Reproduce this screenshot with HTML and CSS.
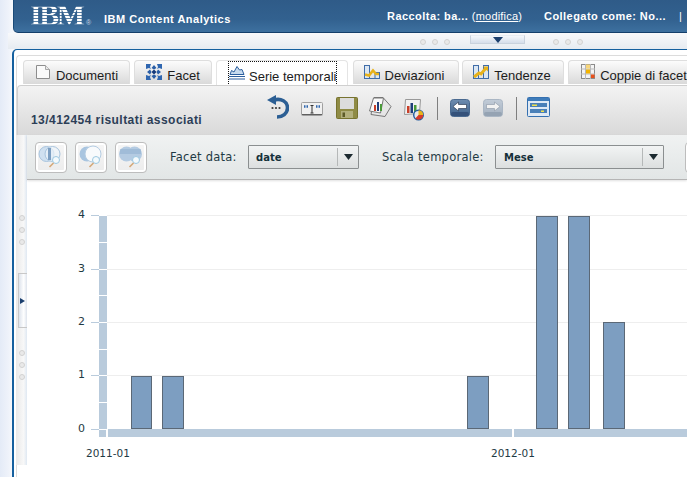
FILE: index.html
```html
<!DOCTYPE html>
<html lang="it">
<head>
<meta charset="utf-8">
<title>IBM Content Analytics</title>
<link rel="stylesheet" href="styles.css">
</head>
<body>
<div class="app">
  <header class="masthead">
    <div class="brand">
      <span class="logo">IBM</span><span class="reg">®</span>
      <span class="product">IBM Content Analytics</span>
    </div>
    <div class="meta">
      <span class="raccolta">Raccolta: ba... <span class="light">(<a class="link">modifica</a>)</span></span>
      <span class="user">Collegato come: No...</span>
      <span class="sep">|</span>
    </div>
  </header>

  <div class="splitter">
    <span class="dots"><i></i><i></i><i></i></span>
    <span class="handle"><svg width="10" height="6" viewBox="0 0 10 6"><path d="M0 0h10L5 6z" fill="#1b3f6e"/></svg></span>
    <span class="dots"><i></i><i></i><i></i></span>
  </div>

  <main class="panel">
    <div class="panel-inner">
      <nav class="tabs">
        <div class="tab t1"><svg width="16" height="16" viewBox="0 0 16 16"><path d="M1.500 1.500h9l4 4v9h-13z" fill="#fafafa" stroke="#8d8d8d"/><path d="M10.500 1.500v4h4" fill="#e8e8e8" stroke="#a8a8a8"/></svg><span>Documenti</span></div>
        <div class="tab t2"><svg width="16" height="16" viewBox="0 0 16 16"><path d="M0 0h5l-1 3 1 2-2-1-3 1zM16 0h-5l1 3-1 2 2-1 3 1zM0 16h5l-1-3 1-2-2 1-3-1zM16 16h-5l1-3-1-2 2 1 3-1z" fill="#2f66b0"/><path d="M8 1l2.500 3L8 5.500 5.500 4zM8 15l2.500-3L8 10.500 5.500 12zM1 8l3-2.500L5.500 8 4 10.500zM15 8l-3-2.500L10.500 8l1.500 2.500z" fill="#2a5ea6"/><path d="M8 5.500L10.500 8 8 10.500 5.500 8z" fill="#15397a"/></svg><span>Facet</span></div>
        <div class="tab tab-active t3"><span class="focus"><svg width="16" height="15" viewBox="0 0 16 15"><path d="M1 9.500l1.500-4 2.500 1.500 3-5.500 2.500 3.500 2.500-.5 2 5z" fill="#c6daee" stroke="#2c5f9e"/><path d="M0 11.500h16M0 14h16" stroke="#2c5f9e" stroke-width="1.200"/></svg><span>Serie temporali</span></span></div>
        <div class="tab t4"><svg width="16" height="15" viewBox="0 0 16 15"><rect x=".5" y="1.500" width="5" height="13" fill="#dbe6f2" stroke="#3f6ca8"/><rect x="11" y="8.500" width="4.500" height="6" fill="#dbe6f2" stroke="#3f6ca8"/><path d="M5.500 14.500h5.500" stroke="#3f6ca8"/><path d="M1 10.500l4 1 4-5 3 3.500h3" fill="none" stroke="#e8b21a" stroke-width="2.600"/></svg><span>Deviazioni</span></div>
        <div class="tab t5"><svg width="16" height="15" viewBox="0 0 16 15"><rect x=".5" y="1.500" width="5" height="13" fill="#dbe6f2" stroke="#3f6ca8"/><rect x="10.500" y="1.500" width="5" height="13" fill="#dbe6f2" stroke="#3f6ca8"/><path d="M5.500 14.500h5" stroke="#3f6ca8"/><path d="M1 13l5-4 2 1 5-6" fill="none" stroke="#e8b21a" stroke-width="3"/><path d="M10 2.500h5v5z" fill="#e8b21a"/></svg><span>Tendenze</span></div>
        <div class="tab t6"><svg width="14" height="15" viewBox="0 0 14 15"><rect x=".5" y=".5" width="13" height="14" fill="#f4f4f4" stroke="#8a8a8a"/><path d="M4.500 0v15M9.500 0v15M0 5h14M0 10h14" stroke="#b8b8b8"/><rect x="5" y="5.500" width="4" height="4" fill="#f4b400"/><rect x="10" y="10.500" width="3.500" height="3.500" fill="#e8501a"/><rect x="5" y=".5" width="4" height="4" fill="#f9d77a"/></svg><span>Coppie di facet</span></div>
      </nav>

      <section class="toolbar">
        <div class="count">13/412454 risultati associati</div>
        <div class="tools">
          <svg class="ti ti-undo" width="22" height="24" viewBox="0 0 22 24"><path d="M7 5C14 3 20.500 6.500 20.500 13c0 5.500-5 9-10.500 9" fill="none" stroke="#2c5f94" stroke-width="3.600"/><path d="M0 5l9-5v10z" fill="#2c5f94"/><circle cx="5.500" cy="13" r="1.100" fill="#3a3a3a"/><circle cx="9" cy="13" r="1.100" fill="#3a3a3a"/><circle cx="12.500" cy="13" r="1.100" fill="#3a3a3a"/></svg>
          <svg class="ti ti-quote" width="22" height="14" viewBox="0 0 22 14"><rect x=".5" y=".5" width="21" height="13" rx="1" fill="#f0f0f0" stroke="#a0a0a0"/><path d="M1 12.500h20" stroke="#5f5f5f"/><path d="M3 4.500h1.500M5.500 4.500H7M15 4.500h1.500M17.500 4.500H19" stroke="#2f66ad" stroke-width="2.400"/><path d="M11 4v7M9.500 3.500h3M9.500 11h3" stroke="#333"/></svg>
          <svg class="ti ti-save" width="22" height="22" viewBox="0 0 22 22"><rect x=".5" y=".5" width="21" height="21" rx="1" fill="#8f8b45" stroke="#77732f"/><rect x="4" y="1" width="14" height="11" fill="#dcdcdc"/><rect x="5" y="14" width="12" height="7" fill="#b3b07c"/><rect x="6.500" y="15.500" width="2.500" height="4.500" fill="#5d5b28"/></svg>
          <svg class="ti ti-sheets" width="24" height="22" viewBox="0 0 24 22"><path d="M6 1.500h9l8 9-6 10-14-2z" fill="#e6e6e6" stroke="#777"/><path d="M1.500 15l4-13h10l-3 15z" fill="#fafafa" stroke="#777"/><rect x="6" y="9" width="2" height="6" fill="#c8402a"/><rect x="9" y="6" width="2" height="9" fill="#203f7a"/><rect x="12" y="8" width="2" height="7" fill="#4a9a3a"/></svg>
          <svg class="ti ti-chart" width="22" height="24" viewBox="0 0 22 24"><path d="M3.500 2.500h15l-1 14-15 1z" fill="#f2f2f2" stroke="#999"/><rect x="5" y="9" width="2.500" height="7" fill="#c8402a"/><rect x="8.500" y="6" width="2.500" height="10" fill="#203f7a"/><rect x="12" y="8" width="2.500" height="8" fill="#4a9a3a"/><circle cx="16.500" cy="18" r="4.800" fill="#e8e8e8" stroke="#1e5aa0" stroke-width="1.400"/><path d="M16.500 18v-4.800a4.800 4.800 0 0 1 4.800 4.800z" fill="#e8b21a"/><path d="M16.500 18h4.800a4.800 4.800 0 0 1-8 3.500z" fill="#d83a2a"/></svg>
          <span class="vr"></span>
          <svg class="ti ti-nav" width="20" height="18" viewBox="0 0 20 18"><defs><linearGradient id="nb" x1="0" y1="0" x2="0" y2="1"><stop offset="0" stop-color="#6f8db0"/><stop offset="1" stop-color="#3c5f88"/></linearGradient></defs><rect x=".5" y=".5" width="19" height="17" rx="3" fill="url(#nb)" stroke="#4a6a90"/><rect x="1" y="13" width="18" height="4" rx="2" fill="#34517a"/><path d="M3 7.500l5.500-4.500v2.500h8v4h-8V12z" fill="#fff" stroke="#1d2c44" stroke-width=".6"/></svg>
          <svg class="ti ti-nav ti-fwd" width="20" height="18" viewBox="0 0 20 18"><defs><linearGradient id="nf" x1="0" y1="0" x2="0" y2="1"><stop offset="0" stop-color="#c2ccd8"/><stop offset="1" stop-color="#a3b0bf"/></linearGradient></defs><rect x=".5" y=".5" width="19" height="17" rx="3" fill="url(#nf)" stroke="#aab6c4"/><rect x="1" y="13" width="18" height="4" rx="2" fill="#95a3b3"/><path d="M17 7.500L11.500 3v2.500h-8v4h8V12z" fill="#f2f2f2" stroke="#8a96a5" stroke-width=".6"/></svg>
          <span class="vr vr2"></span>
          <svg class="ti ti-layout" width="23" height="20" viewBox="0 0 23 20"><rect x=".5" y=".5" width="22" height="19" rx="1" fill="#dfe9f4" stroke="#3570b0"/><rect x="1" y="1" width="21" height="3" fill="#3f7cba"/><rect x="3" y="6" width="17" height="4" fill="#4a80b8"/><rect x="3" y="12" width="17" height="4" fill="#4a80b8"/><rect x="5" y="7.500" width="5" height="1.500" fill="#f0e04a"/><rect x="14" y="13.500" width="3" height="1.500" fill="#f0e04a"/></svg>
        </div>
      </section>

      <div class="workspace">
        <aside class="strip">
          <span class="sdots"><i></i><i></i><i></i></span>
          <span class="shandle"><svg width="5" height="6" viewBox="0 0 5 6"><path d="M0 0l5 3-5 3z" fill="#1b3f6e"/></svg></span>
          <span class="sdots"><i></i><i></i><i></i></span>
        </aside>
        <div class="content">
          <section class="filters">
            <button class="zbtn"><svg width="26" height="24" viewBox="0 0 26 24"><circle cx="8.500" cy="9" r="7.500" fill="#cfe0f0" stroke="#a8c4de"/><circle cx="14.500" cy="9" r="7.500" fill="#edf4fa" fill-opacity=".7" stroke="#a8c4de"/><path d="M10 3v12h3V3z" fill="#7d9fc2"/><circle cx="18" cy="15" r="3.500" fill="#f4fafd" stroke="#9cc8e0"/><path d="M15.500 18l-4 4" stroke="#d4a878" stroke-width="1.600"/></svg></button>
            <button class="zbtn"><svg width="26" height="24" viewBox="0 0 26 24"><circle cx="9" cy="9" r="7.500" fill="#a9c5e0"/><circle cx="15" cy="9" r="8" fill="#f8fafc" stroke="#b4cce2"/><circle cx="18" cy="15" r="3.500" fill="#f4fafd" stroke="#9cc8e0"/><path d="M15.500 18l-4 4" stroke="#d4a878" stroke-width="1.600"/></svg></button>
            <button class="zbtn"><svg width="26" height="24" viewBox="0 0 26 24"><circle cx="8.500" cy="9" r="7.500" fill="#b4cbe2"/><circle cx="16.500" cy="9" r="7.500" fill="#b4cbe2"/><path d="M2 4h21v5H2z" fill="#8fb0d0" opacity=".55"/><circle cx="18" cy="15" r="3.500" fill="#f4fafd" stroke="#9cc8e0"/><path d="M15.500 18l-4 4" stroke="#d4a878" stroke-width="1.600"/></svg></button>
            <label class="flabel l1">Facet data:</label>
            <div class="select s1"><span class="val v1">date</span><span class="arrow"><svg width="9" height="6" viewBox="0 0 9 6"><path d="M0 0h9L4.500 6z" fill="#1c2a30"/></svg></span></div>
            <label class="flabel l2">Scala temporale:</label>
            <div class="select s2"><span class="val">Mese</span><span class="arrow"><svg width="9" height="6" viewBox="0 0 9 6"><path d="M0 0h9L4.500 6z" fill="#1c2a30"/></svg></span></div>
            <button class="zbtn zlast"></button>
          </section>
          <svg class="chart" width="660" height="285" viewBox="27 180 660 285">
            <g class="grid">
              <path d="M107 215.500H687M107 269.500H687M107 322.500H687M107 375.500H687"/>
            </g>
            <g class="axis">
              <path d="M91 215.500h8M91 269.500h8M91 322.500h8M91 375.500h8M91 429.500h8" class="tick"/>
              <rect x="99" y="216" width="8" height="221"/>
              <rect x="108" y="429" width="579" height="8"/>
              <path d="M99 242.500h8M99 269.500h8M99 295.500h8M99 322.500h8M99 349.500h8M99 375.500h8M99 402.500h8M99 429.500h8" class="notch"/>
              <rect x="512" y="429" width="2" height="8" class="gap"/>
              <rect x="106" y="429" width="2" height="8" class="gap"/>
            </g>
            <g class="bars">
              <rect x="131.500" y="376.500" width="20" height="52"/>
              <rect x="162.500" y="376.500" width="21" height="52"/>
              <rect x="467.500" y="376.500" width="21" height="52"/>
              <rect x="536.500" y="216.500" width="21" height="212"/>
              <rect x="568.500" y="216.500" width="21" height="212"/>
              <rect x="603.500" y="322.500" width="21" height="106"/>
            </g>
            <g class="ylabels">
              <text x="85" y="218">4</text>
              <text x="85" y="272">3</text>
              <text x="85" y="325">2</text>
              <text x="85" y="378">1</text>
              <text x="85" y="432">0</text>
            </g>
            <text class="xlabel" x="86" y="457">2011-01</text>
            <text class="xlabel" x="491" y="457">2012-01</text>
          </svg>
        </div>
      </div>
    </div>
  </main>
</div>
</body>
</html>
```
FILE: styles.css
```css
* { box-sizing: border-box; }
html, body { margin: 0; padding: 0; height: 100%; overflow: hidden; background: #fff; }
.app {
  width: 687px; height: 477px; overflow: hidden;
  display: flex; flex-direction: column;
  background: linear-gradient(90deg, #e4ebf7 0, #eef2fa 8px, #f6f8fc 13px);
  font-family: "Liberation Sans", Arial, sans-serif;
}

/* masthead */
.masthead {
  height: 33px; margin-left: 13px; flex: none;
  display: flex; justify-content: space-between; align-items: stretch;
  background: linear-gradient(#2f5b88 0, #32618f 60%, #3d709f 100%);
  border-bottom: 1px solid #143f6b;
  border-left: 1px solid #1a4a78;
  border-bottom-left-radius: 5px;
  color: #fff; font-weight: bold; font-size: 11px;
}
.brand { display: flex; align-items: flex-start; padding-left: 16px; }
.logo {
  font-family: "Liberation Serif", serif; font-weight: bold; font-size: 30px; line-height: 28px;
  width: 56px; letter-spacing: -2.500px; margin-top: 1px;
  background: repeating-linear-gradient(#fff 0 2px, rgba(255,255,255,.2) 2px 3px);
  -webkit-background-clip: text; background-clip: text; color: transparent;
}
.reg { font-size: 7px; font-weight: normal; color: #c9d6e4; margin-top: 19px; width: 18px; }
.product { margin-top: 13px; line-height: 13px; letter-spacing: .5px; }
.meta { display: flex; align-items: flex-start; padding-top: 9px; line-height: 14px; width: 300px; letter-spacing: .45px; }
.raccolta { width: 157px; }
.light { font-weight: normal; letter-spacing: .2px; }
.link { color: #fff; text-decoration: underline; }
.user { width: 135px; }
.sep { font-weight: normal; }

/* splitter */
.splitter {
  height: 16px; margin-left: 8px; flex: none; padding-top: 2px;
  display: flex; justify-content: flex-start; align-items: flex-start;
  background: linear-gradient(#f8f9fb, #eef1f5 60%, #e6ebf1);
}
.dots { display: flex; gap: 6px; margin-top: 4px; }
.dots:first-child { margin-left: 412px; }
.dots i, .sdots i {
  width: 6px; height: 6px; border-radius: 50%;
  border: 1px solid #d2d2d2; background: #e9e9e9; display: block;
}
.handle {
  width: 55px; height: 9px; margin: 0 28px 0 20px;
  background: linear-gradient(#f4f7fb, #d5deea);
  border: 1px solid #c9d2dd; border-top-color: #e8edf3;
  display: flex; justify-content: center; align-items: center;
}

/* panel */
.panel {
  flex: 1; margin-left: 12px; min-height: 0; padding: 5px 0 0 3px;
  background: #fff;
  border-left: 2px solid #15609f; border-top: 1px solid #15609f;
  border-top-left-radius: 5px;
}
.panel-inner {
  height: 100%; display: flex; flex-direction: column;
  border-top: 1px solid #dcdcdc; border-left: 1px solid #dcdcdc; border-top-left-radius: 4px;
  margin-left: -1px;
}

/* tabs */
.tabs { display: flex; gap: 4px; padding: 4px 0 0 6px; height: 29px; flex: none; width: 700px; }
.tab {
  height: 24px; flex: none;
  display: flex; align-items: center; justify-content: center; gap: 5px;
  border: 1px solid #dedede; border-bottom: 0; border-radius: 4px 4px 0 0;
  background: linear-gradient(#fcfcfc, #d9d9d9);
  font-size: 13px; color: #1c1c1c; padding-top: 5px; white-space: nowrap;
}
.tab svg { flex: none; margin-top: -7px; }
.t1 { width: 107px; }
.t2 { width: 78px; }
.t3 { width: 132px; justify-content: flex-start; padding-left: 11px; }
.t4 { width: 106px; margin-left: 1px; padding-right: 4px; }
.t5 { width: 102px; margin-left: -1px; padding-right: 2px; }
.t6 { width: 132px; }
.tab-active { background: #fff; border-color: #e4e4e4; height: 26px; padding-top: 0; align-items: stretch; }
.focus {
  display: flex; align-items: center; gap: 4px; width: 109px; padding-top: 5px;
  border: 1px dotted #111;
}

/* toolbar */
.toolbar {
  height: 50px; flex: none; position: relative; padding-top: 6px;
  background: linear-gradient(#f3f3f3, #d9d9d9);
  border-top: 1px solid #cfcfcf; border-left: 1px solid #cfcfcf; border-top-left-radius: 4px;
}
.count { position: absolute; left: 13px; top: 27px; font-weight: bold; font-size: 12px; color: #2c3e57; letter-spacing: .45px; white-space: nowrap; }
.tools { display: flex; align-items: center; padding-left: 249px; height: 29px; }
.ti { flex: none; }
.ti-undo { margin-right: 12px; }
.ti-quote { margin-right: 13px; margin-top: 4px; }
.ti-save { margin-right: 10px; margin-top: 2px; }
.ti-sheets { margin-right: 10px; }
.ti-chart { margin-right: 13px; margin-top: 4px; }
.ti-nav { margin-right: 13px; margin-top: 3px; }
.ti-fwd { margin-right: 13px; }
.vr { width: 1px; height: 23px; background: #7f7f7f; margin-right: 12px; margin-top: 4px; flex: none; }
.vr2 { margin-right: 10px; }

/* workspace */
.workspace { flex: 1; display: flex; min-height: 0; }
.strip {
  width: 11px; margin-left: -1px; margin-bottom: 12px; flex: none;
  display: flex; flex-direction: column; align-items: flex-start;
  background: linear-gradient(90deg, #e9e9e9, #f8f8f8 70%, #dfe8f2);
  padding-top: 80px;
}
.sdots { display: flex; flex-direction: column; gap: 6px; margin-left: 3px; }
.shandle {
  width: 9px; height: 55px; margin: 28px 0 22px 2px;
  background: linear-gradient(90deg, #dde3ec, #fff 60%, #dde3ec);
  border: 1px solid #c8c8c8; border-right: 0;
  display: flex; align-items: center; padding-left: 1px;
}
.content { flex: 1; display: flex; flex-direction: column; min-width: 0; }
.filters {
  height: 45px; flex: none; display: flex; align-items: center;
  padding-left: 8px; white-space: nowrap;
  background: linear-gradient(#f0f2f2, #e2e6e6);
  border-bottom: 1px solid #b5b5b5;
  box-shadow: 0 1px 2px rgba(0,0,0,.12);
  position: relative;
}
.zbtn {
  width: 32px; height: 31px; flex: none; margin: 0 8px 0 0; padding: 0;
  border: 1px solid #bdbdbd; border-radius: 4px;
  background: linear-gradient(#f6f6f6, #ececec);
  box-shadow: inset 0 0 0 2px #fff;
  display: flex; align-items: center; justify-content: center;
}
.flabel { font-family: "DejaVu Sans", sans-serif; font-size: 11.500px; color: #1f3a44; letter-spacing: .25px; flex: none; }
.l1 { margin-left: 15px; width: 78px; }
.l2 { margin-left: 23px; width: 113px; }
.select {
  height: 24px; flex: none; display: flex; align-items: center; justify-content: space-between;
  border: 1px solid #8b8f90; border-radius: 1px;
  background: linear-gradient(#f2f4f4, #dcdfdf);
  font-family: "DejaVu Sans", sans-serif; font-weight: bold; font-size: 10px; color: #15303a;
}
.s1 { width: 111px; }
.s2 { width: 169px; }
.val { padding-left: 8px; }
.v1 { padding-left: 7px; }
.arrow {
  width: 21px; height: 18px; display: flex; align-items: center; justify-content: center;
  border-left: 1px solid #b5b8b8;
}
.zlast { margin-left: 21px; }

/* chart */
.chart { display: block; flex: none; }
.grid path { stroke: #eeeeee; fill: none; }
.axis rect { fill: #b9cbdc; }
.axis .tick { stroke: #b9cbdc; fill: none; }
.axis .notch { stroke: #fff; fill: none; }
.axis .gap { fill: #fff; }
.bars rect { fill: #7d9ec1; stroke: #5b6876; stroke-width: 1; }
.ylabels text { font-family: "DejaVu Sans", sans-serif; font-size: 11px; fill: #1f3a44; text-anchor: end; }
.xlabel { font-family: "DejaVu Sans", sans-serif; font-size: 10.500px; fill: #1f3a44; }
```
